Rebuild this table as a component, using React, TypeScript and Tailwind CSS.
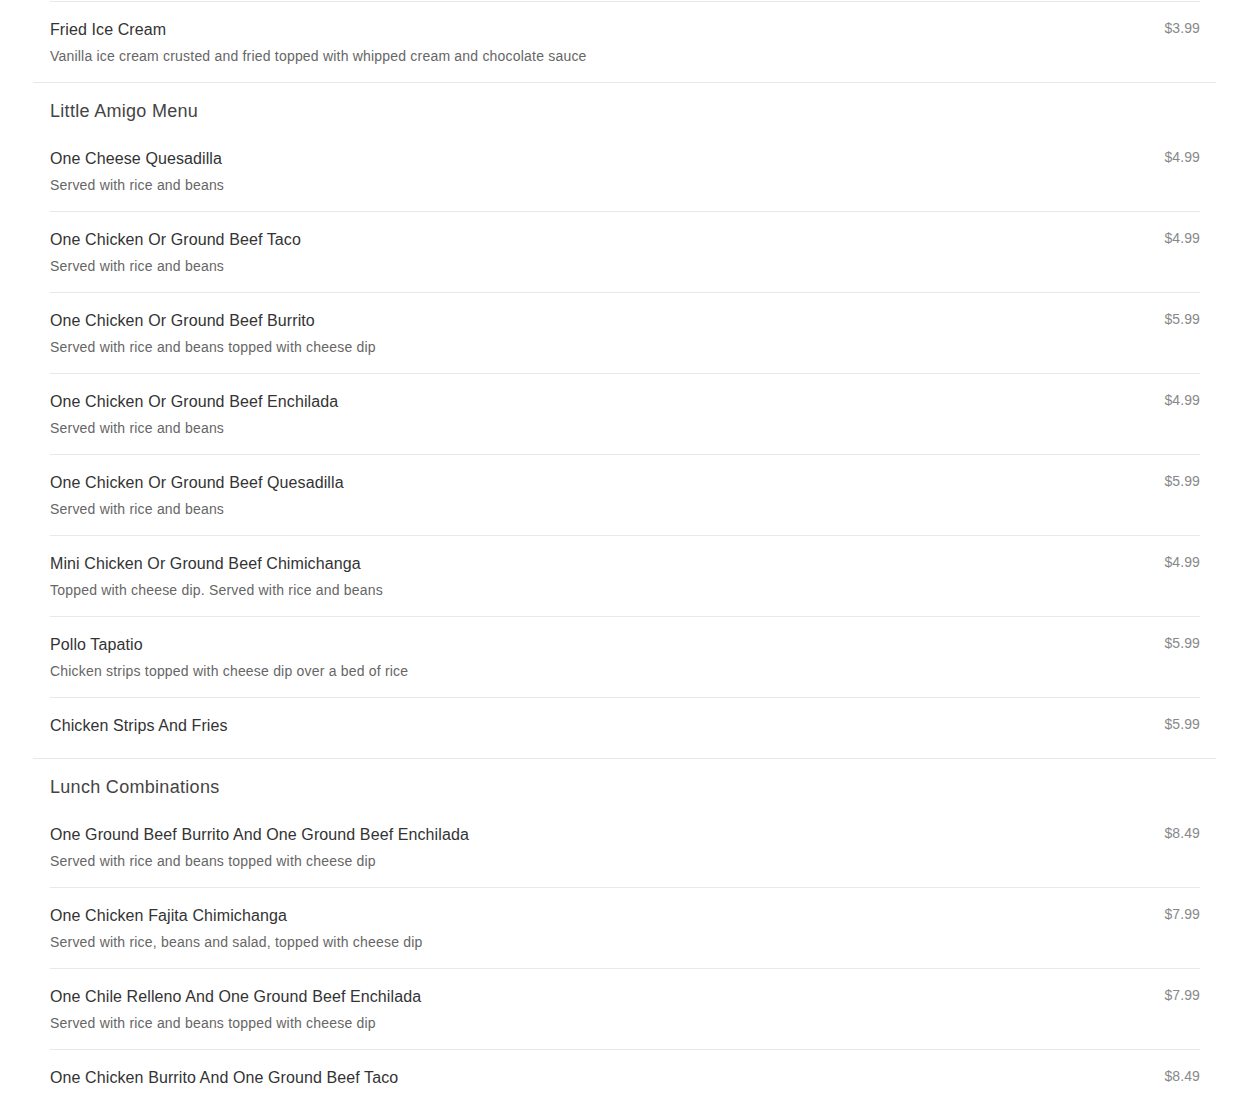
import React from "react";

type Item = { name: string; desc?: string; price: string };
type Section = { title?: string; items: Item[]; leadingBorder?: boolean };

const sections: Section[] = [
  {
    leadingBorder: true,
    items: [
      {
        name: "Fried Ice Cream",
        desc: "Vanilla ice cream crusted and fried topped with whipped cream and chocolate sauce",
        price: "$3.99",
      },
    ],
  },
  {
    title: "Little Amigo Menu",
    items: [
      { name: "One Cheese Quesadilla", desc: "Served with rice and beans", price: "$4.99" },
      { name: "One Chicken Or Ground Beef Taco", desc: "Served with rice and beans", price: "$4.99" },
      { name: "One Chicken Or Ground Beef Burrito", desc: "Served with rice and beans topped with cheese dip", price: "$5.99" },
      { name: "One Chicken Or Ground Beef Enchilada", desc: "Served with rice and beans", price: "$4.99" },
      { name: "One Chicken Or Ground Beef Quesadilla", desc: "Served with rice and beans", price: "$5.99" },
      { name: "Mini Chicken Or Ground Beef Chimichanga", desc: "Topped with cheese dip. Served with rice and beans", price: "$4.99" },
      { name: "Pollo Tapatio", desc: "Chicken strips topped with cheese dip over a bed of rice", price: "$5.99" },
      { name: "Chicken Strips And Fries", price: "$5.99" },
    ],
  },
  {
    title: "Lunch Combinations",
    items: [
      { name: "One Ground Beef Burrito And One Ground Beef Enchilada", desc: "Served with rice and beans topped with cheese dip", price: "$8.49" },
      { name: "One Chicken Fajita Chimichanga", desc: "Served with rice, beans and salad, topped with cheese dip", price: "$7.99" },
      { name: "One Chile Relleno And One Ground Beef Enchilada", desc: "Served with rice and beans topped with cheese dip", price: "$7.99" },
      { name: "One Chicken Burrito And One Ground Beef Taco", desc: "Served with rice and beans", price: "$8.49" },
    ],
  },
];

function MenuItem({ item, border }: { item: Item; border: boolean }) {
  return (
    <div className={`flex justify-between pt-[17px] pb-4 ${border ? "border-t border-[#e8e8e8]" : ""}`}>
      <div className="flex flex-col">
        <div className="text-[16px] leading-[22px] text-[#333] tracking-[0.1px] mb-[5px]">{item.name}</div>
        {item.desc && (
          <div className="text-[14px] leading-[20px] text-[#666] tracking-[0.2px]">{item.desc}</div>
        )}
      </div>
      <div className="text-[14px] leading-[18px] text-[#888] tracking-[0.1px]">{item.price}</div>
    </div>
  );
}

export default function App() {
  return (
    <div className="bg-white w-[1250px] min-h-[1095px] pt-px" style={{ fontFamily: '"Liberation Sans", Arial, sans-serif' }}>
      <div className="ml-[33px] w-[1183px] flex flex-col">
        {sections.map((s, si) => (
          <div key={si} className={`pl-[17px] pr-[16px] ${si > 0 ? "border-t border-[#e8e8e8] pt-4" : ""}`}>
            {s.title && (
              <div className="text-[18px] leading-[24px] text-[#444] tracking-[0.3px] mb-[8px]">{s.title}</div>
            )}
            {s.items.map((it, ii) => (
              <MenuItem key={ii} item={it} border={ii > 0 || !!s.leadingBorder} />
            ))}
          </div>
        ))}
      </div>
    </div>
  );
}
